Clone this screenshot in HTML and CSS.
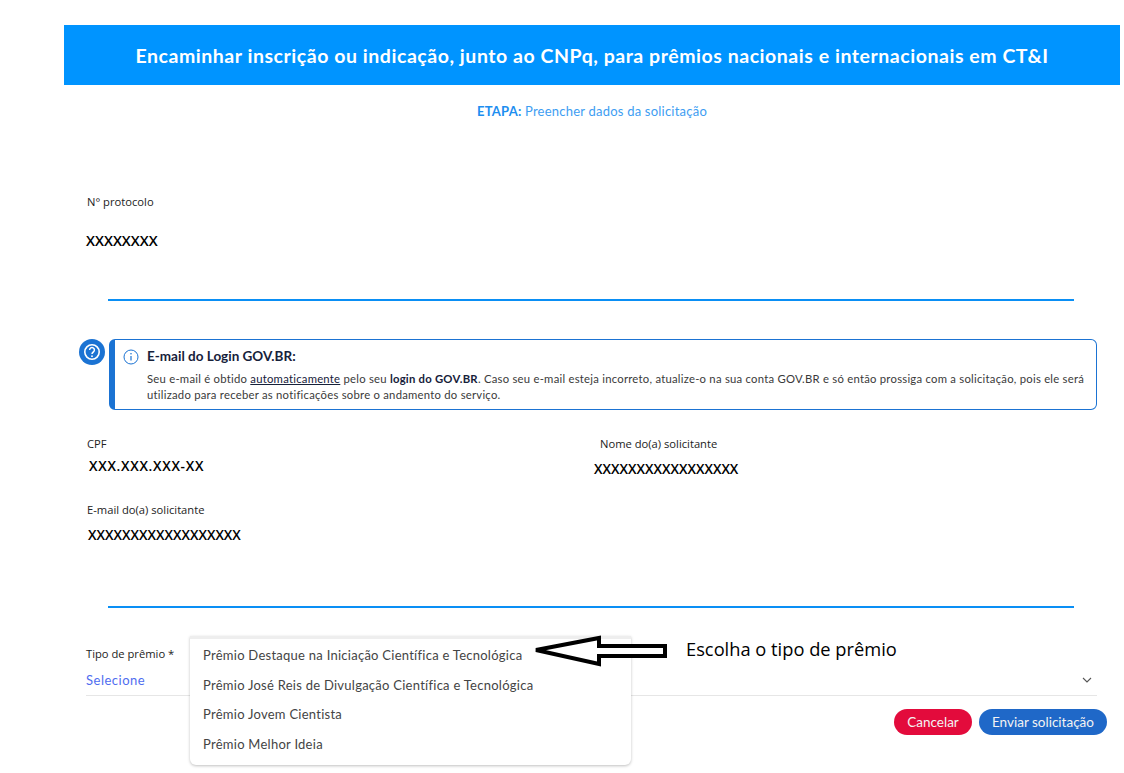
FILE: index.html
```html
<!DOCTYPE html>
<html lang="pt-BR">
<head>
<meta charset="utf-8">
<title>Encaminhar inscrição</title>
<link rel="stylesheet" href="styles.css">
</head>
<body>
<main class="page">
  <header class="banner"><h1>Encaminhar inscrição ou indicação, junto ao CNPq, para prêmios nacionais e internacionais em CT&amp;I</h1></header>
  <p class="step"><b>ETAPA:</b> Preencher dados da solicitação</p>

  <section class="protocol">
    <div class="label">N° protocolo</div>
    <div class="value">XXXXXXXX</div>
  </section>
  <hr class="rule rule-one">

  <section class="notice-row">
    <span class="help">
      <svg viewBox="0 0 26 26" width="26" height="26" aria-hidden="true"><circle cx="13" cy="13" r="13" fill="#1b73d3"/><circle cx="13" cy="13" r="7.2" fill="none" stroke="#fff" stroke-width="1.6"/><path d="M10.6 11a2.4 2.4 0 1 1 3.7 2c-.9.6-1.3 1-1.3 2" fill="none" stroke="#fff" stroke-width="1.5"/><circle cx="13" cy="17.2" r=".9" fill="#fff"/></svg>
    </span>
    <div class="notice">
      <svg class="info" viewBox="0 0 16 16" width="16" height="16" aria-hidden="true"><circle cx="8" cy="8" r="7" fill="none" stroke="#1b73d3" stroke-width="1"/><path d="M8 7v4.6" stroke="#1b73d3" stroke-width="1.2"/><circle cx="8" cy="4.8" r=".8" fill="#1b73d3"/></svg>
      <div class="notice-body">
        <h2>E-mail do Login GOV.BR:</h2>
        <p>Seu e-mail é obtido <u>automaticamente</u> pelo seu <b>login do GOV.BR</b>. Caso seu e-mail esteja incorreto, atualize-o na sua conta GOV.BR e só então prossiga com a solicitação, pois ele será utilizado para receber as notificações sobre o andamento do serviço.</p>
      </div>
    </div>
  </section>

  <section class="people">
    <div class="person">
      <div class="label">CPF</div>
      <div class="value value-cpf">XXX.XXX.XXX-XX</div>
    </div>
    <div class="person person-name">
      <div class="label label-name">Nome do(a) solicitante</div>
      <div class="value value-name">XXXXXXXXXXXXXXXXX</div>
    </div>
  </section>
  <section class="email">
    <div class="label">E-mail do(a) solicitante</div>
    <div class="value value-email">XXXXXXXXXXXXXXXXXX</div>
  </section>
  <hr class="rule rule-two">

  <section class="award">
    <div class="label award-label">Tipo de prêmio *</div>
    <div class="select">
      <span>Selecione</span>
      <svg viewBox="0 0 10 6" width="10" height="6" aria-hidden="true"><path d="M1 1l4 4 4-4" fill="none" stroke="#555" stroke-width="1.1"/></svg>
    </div>
    <ul class="menu">
      <li>Prêmio Destaque na Iniciação Científica e Tecnológica</li>
      <li>Prêmio José Reis de Divulgação Científica e Tecnológica</li>
      <li>Prêmio Jovem Cientista</li>
      <li>Prêmio Melhor Ideia</li>
    </ul>
    <svg class="arrow" viewBox="0 0 136 32" width="136" height="32" aria-hidden="true"><path d="M4 15 67 3v8h66v10H67v8z" fill="#fff" stroke="#000" stroke-width="4" stroke-linejoin="miter"/></svg>
    <div class="hint">Escolha o tipo de prêmio</div>
  </section>

  <div class="actions">
    <button class="btn btn-cancel" type="button">Cancelar</button>
    <button class="btn btn-send" type="button">Enviar solicitação</button>
  </div>
</main>
</body>
</html>
```
FILE: styles.css
```css
* { box-sizing: border-box; }
html, body { margin: 0; height: 773px; overflow: hidden; background: #fff; }
body { font-family: "Lato", "Open Sans", sans-serif; color: #1c1c1c; }
.page { padding: 25px 0 0 64px; width: 1124px; }

.banner { width: 1056px; height: 60px; background: #0094ff; display: flex; align-items: center; justify-content: center; }
.banner h1 { margin: 0; color: #fff; font-size: 19.5px; font-weight: 700; letter-spacing: .54px; white-space: nowrap; }
.step { margin: 17px 0 0; text-align: center; font-size: 13px; line-height: 18px; color: #3d9df2; letter-spacing: .22px; width: 1056px; }
.step b { color: #1d8ef0; }

.label { font-family: "Open Sans", sans-serif; font-size: 11.2px; line-height: 15px; color: #222; }
.value { font-family: "Open Sans", sans-serif; font-size: 13.65px; font-weight: 600; line-height: 20px; color: #000; }

.protocol { padding: 74px 0 0 23px; }
.protocol .value { margin-top: 22px; margin-left: -1px; font-size: 14.4px; }

.rule { border: 0; height: 2px; background: #0a8ff5; margin: 0 0 0 44px; width: 966px; }
.rule-one { margin-top: 48px; }

.notice-row { display: flex; margin: 38px 0 0 15px; align-items: flex-start; }
.help { width: 26px; height: 26px; flex: none; margin-right: 4px; display: block; }
.help svg { display: block; }
.notice { width: 988px; height: 71px; border: 1px solid #1b73d3; border-left: 6px solid #1b73d3; border-radius: 6px; display: flex; padding: 8px 8px 0 8px; gap: 8px; }
.info { flex: none; margin-top: 1px; }
.notice h2 { margin: 0; font-size: 13.5px; line-height: 17px; font-weight: 700; color: #16213a; }
.notice p { margin: 6px 0 0; font-size: 11.3px; line-height: 16px; color: #3a3a3a; letter-spacing: .24px; }
.notice p b { color: #16213a; }
.notice p u { color: #16213a; }

.people { display: flex; margin: 26px 0 0 23px; }
.person { width: 513px; }
.value-cpf { margin-top: 5px; margin-left: 2px; letter-spacing: .7px; }
.value-name { margin-top: 8px; margin-left: -6px; }
.email { margin: 23px 0 0 23px; }
.value-email { margin-top: 8px; margin-left: 1px; }

.rule-two { margin-top: 61px; }

.award { position: relative; height: 88px; margin: 0 0 0 22px; width: 1011px; }
.award-label { position: absolute; left: 0; top: 38px; }
.select { position: absolute; left: 0; top: 56px; width: 1011px; height: 32px; border-bottom: 1px solid #e6e6e6; display: flex; justify-content: space-between; align-items: center; font-size: 13px; color: #4f6df0; padding-right: 5px; letter-spacing: .5px; }
.menu { position: absolute; left: 104px; top: 28px; width: 441px; height: 129px; margin: 0; padding: 2px 0 0 13px; list-style: none; background: #fff; border-top: 3px solid #eee; border-radius: 0 0 6px 6px; box-shadow: 0 1px 3px rgba(0,0,0,.25); font-size: 13px; color: #444; letter-spacing: .26px; z-index: 2; }
.menu li { height: 29.6px; line-height: 29.6px; white-space: nowrap; }
.arrow { position: absolute; left: 446px; top: 27px; z-index: 3; }
.hint { position: absolute; left: 600px; top: 29px; font-family: "Open Sans", sans-serif; font-size: 18.3px; line-height: 24px; color: #000; white-space: nowrap; z-index: 3; }

.actions { display: flex; justify-content: flex-end; gap: 7px; width: 1043px; margin-top: 13px; }
.btn { border: 0; height: 26px; border-radius: 13px; font-family: "Lato", sans-serif; font-size: 13.5px; color: #f3f3f3; padding: 0; }
.btn-cancel { width: 78px; background: #e30b3c; }
.btn-send { width: 128px; background: #1f68c8; }
```
